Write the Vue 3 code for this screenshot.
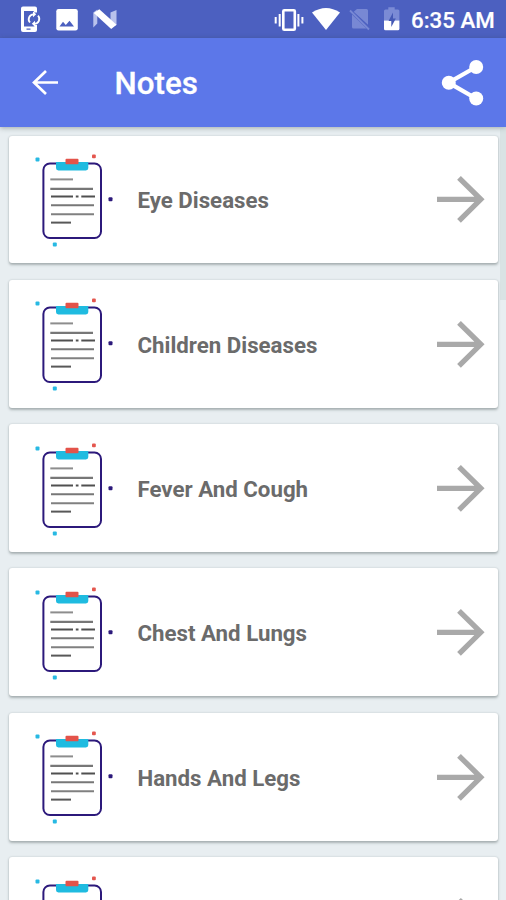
<script setup>
const notes = [
  'Eye Diseases',
  'Children Diseases',
  'Fever And Cough',
  'Chest And Lungs',
  'Hands And Legs',
  '',
]
</script>

<template>
  <div class="screen">
    <div class="status">
      <svg class="sync" width="22" height="26" viewBox="20 6 22 26">
        <path fill="#fff" fill-rule="evenodd" d="M23 6.500h12q2 0 2 2V12.500h-3V11H24v15.500h10.500V25H37v5q0 2-2 2H23q-2 0-2-2V8.500q0-2 2-2zM26.500 28.500v1.300h4v-1.300z" />
        <path d="M33.500 14.300a4.900 4.900 0 0 0-3.500 8.200M34.500 23.800a4.900 4.900 0 0 0 3.500-8.200" fill="none" stroke="#fff" stroke-width="1.800" />
        <path fill="#fff" d="M33 11.200v6l3.200-3zM35 20.800v6l-3.200-3z" />
      </svg>
      <svg class="photo" width="22" height="22" viewBox="56 9 22 22">
        <rect x="56.300" y="9" width="21.500" height="21.500" rx="2.300" fill="#fff" />
        <path d="M59.500 26.500l3.500-4.800 2.800 3.200 3.700-4.200 4.500 5.800z" fill="#4c60c0" />
      </svg>
      <svg class="nougat" width="24" height="20" viewBox="93 9 24 20">
        <path d="M93.300 12.500l4-3v14l-4 4zM110.500 12.500l6-2.500v15l-6 3z" fill="#b9c2ec" />
        <path d="M93.800 13l5.500-3.700L111 19.700l5.500 5-5.300 4.300z" fill="#fff" />
      </svg>
      <span class="grow"></span>
      <svg class="vibrate" width="30" height="24" viewBox="274 8 30 24">
        <rect x="283.300" y="10.300" width="11.500" height="19.500" rx="1" fill="none" stroke="#fff" stroke-width="2.600" />
        <path d="M279.700 14v12.500M275.700 17v6.500M298.400 14v12.500M302.400 17v6.500" stroke="#fff" stroke-width="2" />
      </svg>
      <svg class="wifi" width="28" height="23" viewBox="312 7 28 23">
        <path d="M312 12.500q14-9 28 0L326 30z" fill="#fff" />
      </svg>
      <svg class="sim" width="22" height="22" viewBox="349 9 22 22">
        <path d="M357 9h9.500q1.500 0 1.500 1.500v14.200L353.700 11.800zM352 14.500l14.500 14H353.500q-1.500 0-1.500-1.500z" fill="#7888d4" />
        <path d="M350 10.500l19 19" stroke="#7888d4" stroke-width="1.800" />
      </svg>
      <svg class="battery" width="16" height="24" viewBox="384 7 16 24">
        <path d="M384 11q0-1.500 1.500-1.500h2.800V7.200h6.400v2.300h3.200q1.500 0 1.500 1.500v9.500H384z" fill="#7b8bd5" />
        <path d="M384 20.500h15.400v8.300q0 1.500-1.500 1.500h-12.400q-1.500 0-1.500-1.500z" fill="#fff" />
        <path d="M393 12.500l-4.500 8.500h2.800V27l4.500-8.500H393z" fill="#4559b5" />
      </svg>
      <span class="time">6:35 AM</span>
    </div>

    <header class="toolbar">
      <svg class="back" width="28" height="28" viewBox="31 69 28 28">
        <path d="M58 82.500H34M46 71L34 82.500 46 94" fill="none" stroke="#fff" stroke-width="2.700" />
      </svg>
      <h1>Notes</h1>
      <span class="grow"></span>
      <svg class="share" width="44" height="48" viewBox="441 59 44 48">
        <path d="M476 67l-27.500 15.700L476 98.500" fill="none" stroke="#fff" stroke-width="4.300" />
        <circle cx="476.200" cy="67" r="7" fill="#fff" />
        <circle cx="448.800" cy="82.700" r="7" fill="#fff" />
        <circle cx="476.200" cy="98.500" r="7" fill="#fff" />
      </svg>
    </header>

    <main class="list">
      <article v-for="(note, index) in notes" :key="index" class="card">
        <svg class="clipboard" width="82" height="100" viewBox="33 150 82 100">
          <rect x="43.400" y="163.500" width="57.600" height="74.500" rx="6.500" fill="#fff" stroke="#2c197b" stroke-width="2" />
          <path d="M56 162h32.300v6q0 2.400-2.400 2.400H58.400q-2.400 0-2.400-2.400z" fill="#1fbbe0" />
          <rect x="65.500" y="158.800" width="13" height="5.500" rx="1" fill="#e3534a" />
          <g stroke-width="2" fill="none">
            <path d="M50.300 179.400H73" stroke="#8d8d8d" />
            <path d="M50.300 188.800H93" stroke="#777" stroke-width="2.300" />
            <path d="M51 196.600H73M75.800 196.600h2.700M81.300 196.600H95" stroke="#505050" />
            <path d="M51 205.200H94" stroke="#777" />
            <path d="M51 214.200H94" stroke="#808080" />
            <path d="M51 222.600H71" stroke="#585858" />
          </g>
          <rect x="35.500" y="157.500" width="4" height="4" rx="1" fill="#27b9e3" />
          <rect x="92" y="154.500" width="3.800" height="3.800" rx="1" fill="#e4564e" />
          <rect x="108.500" y="197.200" width="4" height="4" rx="1" fill="#2c197b" />
          <rect x="52.800" y="242.400" width="4" height="4" rx="1" fill="#27b9e3" />
        </svg>
        <span class="label">{{ note }}</span>
        <svg class="arrow" width="50" height="50" viewBox="436 174 50 50">
          <path d="M437 199.300H480M459 177.800l21.800 21.500L459 220.800" fill="none" stroke="#a9a9a9" stroke-width="5.300" />
        </svg>
      </article>
      <div class="scrollbar"></div>
    </main>
  </div>
</template>

<style>
body {
  margin: 0;
  overflow: hidden;
}
</style>

<style scoped>
.screen {
  width: 506px;
  height: 900px;
  display: flex;
  flex-direction: column;
  overflow: hidden;
  background: #e8eef1;
  font-family: Roboto, "Liberation Sans", sans-serif;
}

svg {
  display: block;
  flex: none;
}

.grow {
  flex: 1;
}

.status {
  flex: none;
  height: 38px;
  box-sizing: border-box;
  padding: 0 12px 0 20px;
  display: flex;
  align-items: flex-start;
  background: #4c60c0;
}

.sync {
  margin-top: 6px;
}

.photo {
  margin: 9px 0 0 14px;
}

.nougat {
  margin: 9px 0 0 15px;
}

.vibrate {
  margin-top: 8px;
}

.wifi {
  margin: 7px 0 0 8px;
}

.sim {
  margin: 9px 0 0 9px;
}

.battery {
  margin: 7px 0 0 13px;
}

.time {
  width: 83px;
  margin-left: 11px;
  font-size: 22.300px;
  font-weight: 500;
  line-height: 41px;
  color: #fff;
  white-space: nowrap;
  -webkit-text-stroke: 0.2px #fff;
}

.toolbar {
  flex: none;
  height: 89px;
  box-sizing: border-box;
  padding: 0 21px 0 31px;
  display: flex;
  align-items: center;
  position: relative;
  background: #5c77e9;
  box-shadow: 0 1px 5px rgba(50, 65, 65, 0.4);
}

h1 {
  margin: 2px 0 0 55.500px;
  font-size: 31.300px;
  font-weight: 500;
  line-height: 40px;
  color: #fff;
  -webkit-text-stroke: 0.3px #fff;
}

.list {
  flex: 1;
  min-height: 0;
  padding: 8.500px 8px 0 9px;
  display: flex;
  flex-direction: column;
  gap: 16.400px;
  position: relative;
}

.card {
  flex: none;
  height: 127.900px;
  box-sizing: border-box;
  padding: 0 12.500px 0 24px;
  display: flex;
  align-items: center;
  border-radius: 3px;
  background: #fff;
  box-shadow: 0 1.500px 2.500px rgba(70, 85, 85, 0.38), 0 0 2px rgba(70, 85, 85, 0.14);
}

.clipboard {
  margin-top: 1.400px;
}

.label {
  flex: 1;
  margin: 2px 0 0 22.500px;
  font-size: 22.250px;
  font-weight: 700;
  line-height: 30px;
  color: #6b6b6b;
}

.scrollbar {
  position: absolute;
  top: 0;
  right: 0;
  width: 6px;
  height: 173px;
  background: rgba(190, 205, 203, 0.35);
}
</style>
